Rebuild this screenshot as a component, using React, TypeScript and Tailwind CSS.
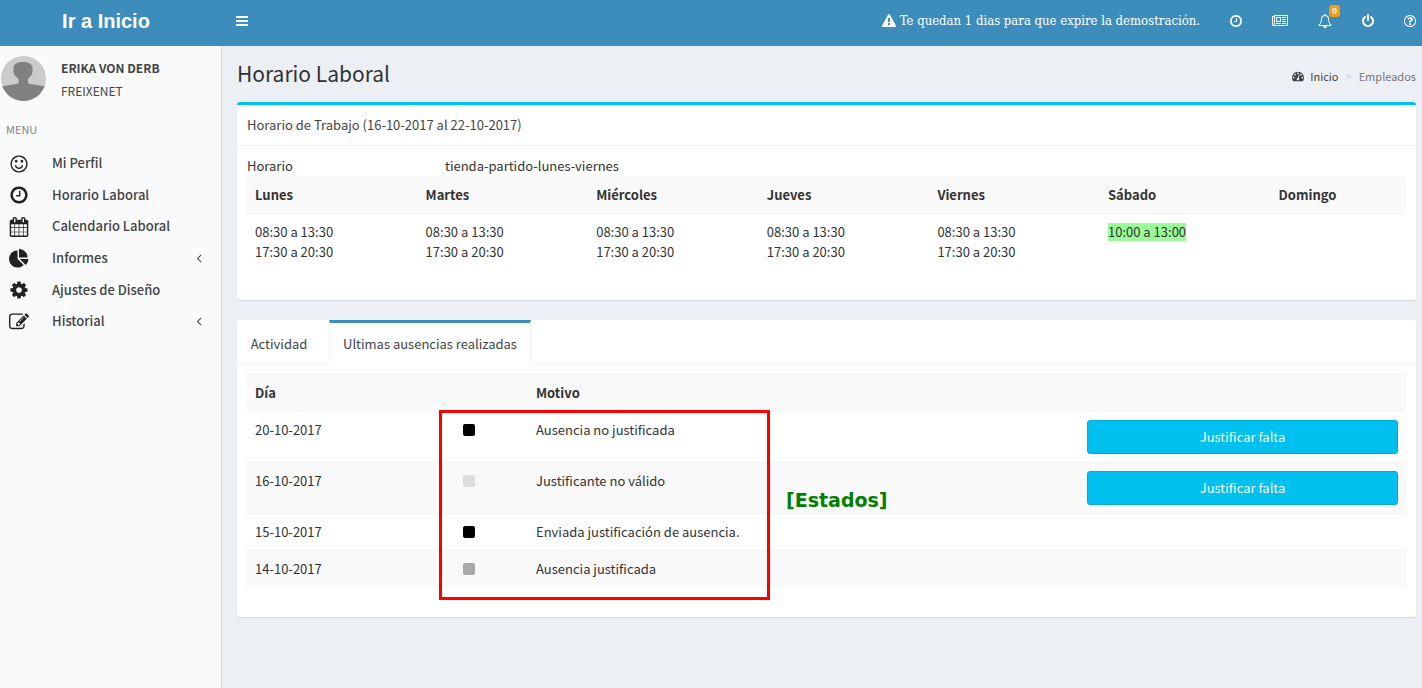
import React from 'react';

const ICONS = {
  bars: 'M1664 1344v128q0 26-19 45t-45 19h-1408q-26 0-45-19t-19-45v-128q0-26 19-45t45-19h1408q26 0 45 19t19 45zm0-512v128q0 26-19 45t-45 19h-1408q-26 0-45-19t-19-45v-128q0-26 19-45t45-19h1408q26 0 45 19t19 45zm0-512v128q0 26-19 45t-45 19h-1408q-26 0-45-19t-19-45v-128q0-26 19-45t45-19h1408q26 0 45 19t19 45z',
  clock: 'M1024 544v448q0 14-9 23t-23 9h-320q-14 0-23-9t-9-23v-64q0-14 9-23t23-9h224v-352q0-14 9-23t23-9h64q14 0 23 9t9 23zm416 352q0-148-73-273t-198-198-273-73-273 73-198 198-73 273 73 273 198 198 273 73 273-73 198-198 73-273zm224 0q0 209-103 385.5t-279.5 279.5-385.5 103-385.5-103-279.5-279.5-103-385.5 103-385.5 279.5-279.5 385.5-103 385.5 103 279.5 279.5 103 385.5z',
  warning: 'M1024 1375v-190q0-14-9.5-23.5t-22.5-9.5h-192q-13 0-22.5 9.5t-9.5 23.5v190q0 14 9.5 23.5t22.5 9.5h192q13 0 22.5-9.5t9.5-23.5zm-2-374l18-459q0-12-10-19-13-11-24-11h-220q-11 0-24 11-10 7-10 21l17 457q0 10 10 16.5t24 6.5h185q14 0 23.5-6.5t10.5-16.5zm-14-934l768 1408q35 63-2 126-17 29-46.5 46t-63.5 17h-1536q-34 0-63.5-17t-46.5-46q-37-63-2-126l768-1408q17-31 47-49t65-18 65 18 47 49z',
  power: 'M1664 896q0 156-61 298t-164 245-245 164-298 61-298-61-245-164-164-245-61-298q0-182 80.5-343t226.5-270q43-32 95.5-25t83.5 50q32 42 24.5 94.5t-49.5 84.5q-98 74-151.5 181t-53.5 228q0 104 40.5 198.5t109.5 163.5 163.5 109.5 198.5 40.5 198.5-40.5 163.5-109.5 109.5-163.5 40.5-198.5q0-121-53.5-228t-151.5-181q-42-32-49.5-84.5t24.5-94.5q31-43 84-50t95 25q146 109 226.5 270t80.5 343zm-640-768v640q0 52-38 90t-90 38-90-38-38-90v-640q0-52 38-90t90-38 90 38 38 90z',
  question: 'M1008 1200v160q0 14-9 23t-23 9h-160q-14 0-23-9t-9-23v-160q0-14 9-23t23-9h160q14 0 23 9t9 23zm256-496q0 50-15 90t-45.5 69-52 44-59.5 36q-32 18-46.5 28t-26 24-11.5 29v32q0 14-9 23t-23 9h-160q-14 0-23-9t-9-23v-68q0-35 10.5-64.5t24-47.5 39-35.5 41-25.5 44.5-21q53-25 75-43t22-49q0-42-43.5-71.5t-95.5-29.5q-56 0-95 27-29 20-80 83-9 12-25 12-11 0-19-6l-108-82q-10-7-12-20t5-23q122-192 349-192 129 0 238.5 89.5t109.5 214.5zm-368-448q-130 0-248.5 51t-204 136.5-136.5 204-51 248.5 51 248.5 136.5 204 204 136.5 248.5 51 248.5-51 204-136.5 136.5-204 51-248.5-51-248.5-136.5-204-204-136.5-248.5-51zm768 640q0 209-103 385.5t-279.5 279.5-385.5 103-385.5-103-279.5-279.5-103-385.5 103-385.5 279.5-279.5 385.5-103 385.5 103 279.5 279.5 103 385.5z',
  bell: 'M912 1696q0-16-16-16-59 0-101.5-42.5t-42.5-101.5q0-16-16-16t-16 16q0 73 51.5 124.5t124.5 51.5q16 0 16-16zm-666-288h1300q-266-300-266-832 0-51-24-105t-69-103-121.5-80.5-169.5-31.5-169.5 31.5-121.5 80.5-69 103-24 105q0 532-266 832zm1482 0q0 52-38 90t-90 38h-448q0 106-75 181t-181 75-181-75-75-181h-448q-52 0-90-38t-38-90q50-42 91-88t85-119.5 74.5-158.5 50-206 19.5-260q0-152 117-282.5t307-158.5q-8-19-8-39 0-40 28-68t68-28 68 28 28 68q0 20-8 39 190 28 307 158.5t117 282.5q0 139 19.5 260t50 206 74.5 158.5 85 119.5 91 88z',
  newspaper: 'M1024 512h-384v384h384v-384zm128 640v128h-640v-128h640zm0-768v640h-640v-640h640zm640 768v128h-512v-128h512zm0-256v128h-512v-128h512zm0-256v128h-512v-128h512zm0-256v128h-512v-128h512zm-1536 960v-960h-128v960q0 26 19 45t45 19 45-19 19-45zm1664 0v-1088h-1536v1088q0 33-11 64h1483q26 0 45-19t19-45zm128-1216v1216q0 80-56 136t-136 56h-1664q-80 0-136-56t-56-136v-1088h256v-128h1792z',
  dashboard: 'M384 1152q0-53-37.5-90.5t-90.5-37.5-90.5 37.5-37.5 90.5 37.5 90.5 90.5 37.5 90.5-37.5 37.5-90.5zm192-448q0-53-37.5-90.5t-90.5-37.5-90.5 37.5-37.5 90.5 37.5 90.5 90.5 37.5 90.5-37.5 37.5-90.5zm428 481l101-382q6-26-7.5-48.5t-38.5-29.5-48 6.5-30 39.5l-101 382q-60 5-107 43.5t-63 98.5q-20 77 20 146t117 89 146-20 89-117q16-60-6-117t-72-91zm660-33q0-53-37.5-90.5t-90.5-37.5-90.5 37.5-37.5 90.5 37.5 90.5 90.5 37.5 90.5-37.5 37.5-90.5zm-640-640q0-53-37.5-90.5t-90.5-37.5-90.5 37.5-37.5 90.5 37.5 90.5 90.5 37.5 90.5-37.5 37.5-90.5zm448 192q0-53-37.5-90.5t-90.5-37.5-90.5 37.5-37.5 90.5 37.5 90.5 90.5 37.5 90.5-37.5 37.5-90.5zm320 448q0 261-141 483-19 29-54 29h-1402q-35 0-54-29-141-221-141-483 0-182 71-348t191-286 286-191 348-71 348 71 286 191 191 286 71 348z',
  smile: 'M1262 1075q-37 121-138 195t-228 74-228-74-138-195q-8-25 4-48.5t38-31.5q25-8 48.5 4t31.5 38q25 80 92.5 129.5t151.5 49.5 151.5-49.5 92.5-129.5q8-26 32-38t49-4 37 31.5 4 48.5zm-494-435q0 53-37.5 90.5t-90.5 37.5-90.5-37.5-37.5-90.5 37.5-90.5 90.5-37.5 90.5 37.5 37.5 90.5zm512 0q0 53-37.5 90.5t-90.5 37.5-90.5-37.5-37.5-90.5 37.5-90.5 90.5-37.5 90.5 37.5 37.5 90.5zm256 256q0-130-51-248.5t-136.5-204-204-136.5-248.5-51-248.5 51-204 136.5-136.5 204-51 248.5 51 248.5 136.5 204 204 136.5 248.5 51 248.5-51 204-136.5 136.5-204 51-248.5zm128 0q0 209-103 385.5t-279.5 279.5-385.5 103-385.5-103-279.5-279.5-103-385.5 103-385.5 279.5-279.5 385.5-103 385.5 103 279.5 279.5 103 385.5z',
  calendar: 'M192 1664h288v-288h-288v288zm352 0h320v-288h-320v288zm-352-352h288v-320h-288v320zm352 0h320v-320h-320v320zm-352-384h288v-288h-288v288zm736 736h320v-288h-320v288zm-384-736h320v-288h-320v288zm768 736h288v-288h-288v288zm-384-352h320v-320h-320v320zm-352-864v-288q0-13-9.5-22.5t-22.5-9.5h-64q-13 0-22.5 9.5t-9.5 22.5v288q0 13 9.5 22.5t22.5 9.5h64q13 0 22.5-9.5t9.5-22.5zm736 864h288v-320h-288v320zm-384-384h320v-288h-320v288zm384 0h288v-288h-288v288zm32-480v-288q0-13-9.5-22.5t-22.5-9.5h-64q-13 0-22.5 9.5t-9.5 22.5v288q0 13 9.5 22.5t22.5 9.5h64q13 0 22.5-9.5t9.5-22.5zm384-64v1280q0 52-38 90t-90 38h-1408q-52 0-90-38t-38-90v-1280q0-52 38-90t90-38h128v-96q0-66 47-113t113-47h64q66 0 113 47t47 113v96h384v-96q0-66 47-113t113-47h64q66 0 113 47t47 113v96h128q52 0 90 38t38 90z',
  pie: 'M768 890l546 546q-106 108-247.5 168t-298.5 60q-209 0-385.5-103t-279.5-279.5-103-385.5 103-385.5 279.5-279.5 385.5-103v762zm187 6h773q0 157-60 298.5t-168 247.5zm709-128h-768v-768q209 0 385.5 103t279.5 279.5 103 385.5z',
  cog: 'M1152 896q0-106-75-181t-181-75-181 75-75 181 75 181 181 75 181-75 75-181zm512-109v222q0 12-8 23t-20 13l-185 28q-19 54-39 91 35 50 107 138 10 12 10 25t-9 23q-27 37-99 108t-94 71q-12 0-26-9l-138-108q-44 23-91 38-16 136-29 186-7 28-36 28h-222q-14 0-24.5-8.5t-11.5-21.5l-28-184q-49-16-90-37l-141 107q-10 9-25 9-14 0-25-11-126-114-165-168-7-10-7-23 0-12 8-23 15-21 51-66.5t54-70.5q-27-50-41-99l-183-27q-13-2-21-12.5t-8-23.5v-222q0-12 8-23t19-13l186-28q14-46 39-92-40-57-107-138-10-12-10-24 0-10 9-23 26-36 98.5-107.5t94.5-71.5q13 0 26 10l138 107q44-23 91-38 16-136 29-186 7-28 36-28h222q14 0 24.5 8.5t11.5 21.5l28 184q49 16 90 37l142-107q9-9 24-9 13 0 25 10 129 119 165 170 7 8 7 22 0 12-8 23-15 21-51 66.5t-54 70.5q26 50 41 98l183 28q13 2 21 12.5t8 23.5z',
  edit: 'M888 1184l116-116-152-152-116 116v56h96v96h56zm440-720q-16-16-33 1l-350 350q-17 17-1 33t33-1l350-350q17-17 1-33zm80 594v190q0 119-84.5 203.5t-203.5 84.5h-832q-119 0-203.5-84.5t-84.5-203.5v-832q0-119 84.5-203.5t203.5-84.5h832q63 0 117 25 15 7 18 23 3 17-9 29l-49 49q-14 14-32 8-23-6-45-6h-832q-66 0-113 47t-47 113v832q0 66 47 113t113 47h832q66 0 113-47t47-113v-126q0-13 9-22l64-64q15-15 35-7t20 29zm-96-738l288 288-672 672h-288v-288zm444 132l-92 92-288-288 92-92q28-28 68-28t68 28l152 152q28 28 28 68t-28 68z',
  angleLeft: 'M1203 544q0 13-10 23l-393 393 393 393q10 10 10 23t-10 23l-50 50q-10 10-23 10t-23-10l-466-466q-10-10-10-23t10-23l466-466q10-10 23-10t23 10l50 50q10 10 10 23z',
};

type IconName = keyof typeof ICONS;

const Icon: React.FC<{ name: IconName; className?: string }> = ({ name, className = 'w-3.5 h-3.5' }) => (
  <svg viewBox={name === 'newspaper' ? '0 0 2048 1792' : '0 0 1792 1792'} className={`shrink-0 ${className}`} fill="currentColor" aria-hidden="true">
    <path d={ICONS[name]} />
  </svg>
);

const menu: { label: string; icon: IconName; children?: boolean }[] = [
  { label: 'Mi Perfil', icon: 'smile' },
  { label: 'Horario Laboral', icon: 'clock' },
  { label: 'Calendario Laboral', icon: 'calendar' },
  { label: 'Informes', icon: 'pie', children: true },
  { label: 'Ajustes de Diseño', icon: 'cog' },
  { label: 'Historial', icon: 'edit', children: true },
];

const split = ['08:30 a 13:30', '17:30 a 20:30'];

const week: { day: string; hours: string[]; highlight?: boolean }[] = [
  { day: 'Lunes', hours: split },
  { day: 'Martes', hours: split },
  { day: 'Miércoles', hours: split },
  { day: 'Jueves', hours: split },
  { day: 'Viernes', hours: split },
  { day: 'Sábado', hours: ['10:00 a 13:00'], highlight: true },
  { day: 'Domingo', hours: [] },
];

const absences = [
  { date: '20-10-2017', color: 'bg-black', reason: 'Ausencia no justificada', action: true },
  { date: '16-10-2017', color: 'bg-[#dddddd]', reason: 'Justificante no válido', action: true },
  { date: '15-10-2017', color: 'bg-black', reason: 'Enviada justificación de ausencia.', action: false },
  { date: '14-10-2017', color: 'bg-[#a9a9a9]', reason: 'Ausencia justificada', action: false },
];

const Header: React.FC = () => (
  <header className="flex h-[46px] bg-[#3c8dbc] text-white">
    <a href="#" className="flex w-[212px] shrink-0 items-center justify-center pb-1 font-['Liberation_Sans',sans-serif] text-xl font-bold">
      Ir a Inicio
    </a>
    <button type="button" aria-label="Menú" className="ml-2 flex items-center px-[15px] pb-1">
      <Icon name="bars" />
    </button>
    <div className="ml-auto flex items-center pb-1">
      <p className="flex items-center gap-1 pr-[15px] font-['DejaVu_Serif_Condensed','DejaVu_Serif',serif] text-[13px] whitespace-nowrap">
        <Icon name="warning" />
        Te quedan 1 dias para que expire la demostración.
      </p>
      <button type="button" aria-label="Reloj" className="px-3.5"><Icon name="clock" /></button>
      <button type="button" aria-label="Noticias" className="px-[15px]"><Icon name="newspaper" className="w-4 h-3.5" /></button>
      <button type="button" aria-label="Avisos" className="relative px-[15px]">
        <Icon name="bell" />
        <span className="absolute -top-[9px] right-[7px] rounded-[3px] bg-[#f39c12] px-[3px] py-0.5 font-['Liberation_Sans',sans-serif] text-[9px] leading-2 font-bold">0</span>
      </button>
      <button type="button" aria-label="Salir" className="px-3.5"><Icon name="power" /></button>
      <button type="button" aria-label="Ayuda" className="pr-[5px] pl-3.5"><Icon name="question" /></button>
    </div>
  </header>
);

const Sidebar: React.FC = () => (
  <aside className="w-[222px] shrink-0 border-r border-[#d2d6de] bg-[#f9fafc] text-[#444]">
    {/* User panel */}
    <div className="flex gap-[15px] pt-2.5 pl-px">
      <svg viewBox="0 0 45 45" className="h-[45px] w-[45px] rounded-full" aria-hidden="true">
        <rect width="45" height="45" fill="#cbcbcb" />
        <path d="M12.500 11.500C13 7.500 17 6 22 6s9 1.500 9.500 5.500c.3 2.800 0 5-.8 7-.9 2.400-3.500 3-3.800 5-.3 2.600-.2 4.100 2.500 4.600L45 30.500V45H0V30.500l15.500-2.400c2.700-.6 2.500-2.100 2.100-4.600-.3-2-3.400-2.600-4.300-5-.8-2-1.100-4.200-.8-7z" fill="#808080" />
      </svg>
      <div className="leading-[23px]">
        <p className="text-[12px] font-bold">ERIKA VON DERB</p>
        <p className="text-[12px]">FREIXENET</p>
      </div>
    </div>

    <p className="mt-[19px] pl-1.5 text-[11px] leading-4 text-[#848484]">MENU</p>
    <nav className="mt-2.5 grid h-[190px] grid-rows-6">
      {menu.map((item) => (
        <a key={item.label} href="#" className="flex items-center pr-[15px] pl-[9px] text-[13px] font-medium">
          <Icon name={item.icon} className="mt-0.5 h-5 w-5 text-[#222]" />
          <span className="ml-[23px] flex-1">{item.label}</span>
          {item.children && <Icon name="angleLeft" />}
        </a>
      ))}
    </nav>
  </aside>
);

const Schedule: React.FC = () => (
  <section className="rounded-[3px] border-t-[3px] border-[#00c0ef] bg-white shadow-[0_1px_1px_rgba(0,0,0,0.1)]">
    <h2 className="border-b border-[#f4f4f4] px-2.5 py-2.5 leading-5 text-[#444]">Horario de Trabajo (16-10-2017 al 22-10-2017)</h2>
    <div className="px-2.5 pt-2.5 pb-[30px]">
      <div className="flex leading-5">
        <span className="w-[198px]">Horario</span>
        <span>tienda-partido-lunes-viernes</span>
      </div>
      <table className="w-full table-fixed text-left leading-5">
        <thead>
          <tr className="border-y border-[#f4f4f4] bg-[#f9f9f9]">
            {week.map((d) => (
              <th key={d.day} className="p-2 font-bold not-last:w-[14.72%]">{d.day}</th>
            ))}
          </tr>
        </thead>
        <tbody>
          <tr className="align-top">
            {week.map((d) => (
              <td key={d.day} className="p-2">
                {d.hours.map((h) => (
                  <div key={h}>
                    <span className={d.highlight ? 'inline-block bg-[#98fb98] leading-[18px]' : ''}>{h}</span>
                  </div>
                ))}
              </td>
            ))}
          </tr>
        </tbody>
      </table>
    </div>
  </section>
);

const Absences: React.FC = () => (
  <section className="relative mt-5 rounded-[3px] bg-white shadow-[0_1px_1px_rgba(0,0,0,0.1)]">
    <div role="tablist" className="flex h-11 border-b border-[#f4f4f4] text-[#444]">
      <button type="button" role="tab" aria-selected={false} className="w-[92px] border-t-[3px] border-transparent pr-2 pt-px">
        Actividad
      </button>
      <button type="button" role="tab" aria-selected={true} className="-mb-px w-[202px] border-x border-t-[3px] border-x-[#f4f4f4] border-t-[#3c8dbc] bg-white">
        Ultimas ausencias realizadas
      </button>
    </div>
    <div className="px-2.5 pt-2.5 pb-[30px]">
      <table className="w-full table-fixed text-left leading-5">
        <thead>
          <tr className="border-t border-[#f4f4f4] bg-[#f9f9f9]">
            <th className="w-[208px] p-2 font-bold">Día</th>
            <th className="w-[73px] p-2"></th>
            <th className="p-2 font-bold">Motivo</th>
            <th className="w-[327px] p-2"></th>
          </tr>
        </thead>
        <tbody>
          {absences.map((row) => (
            <tr key={row.date} className="border-t border-[#f4f4f4] align-top even:bg-[#f9f9f9]">
              <td className="p-2">{row.date}</td>
              <td className="p-2">
                <span className={`mt-1 block h-3 w-3 rounded-[2px] ${row.color}`} />
              </td>
              <td className="p-2">{row.reason}</td>
              <td className="p-2">
                {row.action && (
                  <button type="button" className="h-[34px] w-full rounded-[3px] border border-[#00acd6] bg-[#00c0ef] text-white">
                    Justificar falta
                  </button>
                )}
              </td>
            </tr>
          ))}
        </tbody>
      </table>
    </div>

    {/* States callout */}
    <div className="pointer-events-none absolute top-[90px] left-[202px] h-[190px] w-[331px] border-[3px] border-[#ff0000]" />
    <p className="absolute top-[166px] left-[549px] font-['DejaVu_Sans',sans-serif] text-[19px] leading-7 font-bold text-[#008000]">[Estados]</p>
  </section>
);

const App: React.FC = () => {
  return (
    <div className="flex min-h-screen flex-col bg-[#ecf0f5] font-['Noto_Sans_CJK_SC',sans-serif] text-[13px] text-[#333]">
      <Header />
      <div className="flex flex-1">
        <Sidebar />
        <main className="min-w-0 flex-1 pr-1.5 pl-[15px]">
          <div className="flex h-14 items-center justify-between">
            <h1 className="text-[21px]">Horario Laboral</h1>
            <nav aria-label="breadcrumb" className="flex items-center pt-1 text-[11px] text-[#444]">
              <a href="#" className="flex items-center gap-1.5"><Icon name="dashboard" className="h-3 w-3" />Inicio</a>
              <span className="px-[7px] text-[#ccc]">&gt;</span>
              <span className="text-[#777]">Empleados</span>
            </nav>
          </div>
          <Schedule />
          <Absences />
        </main>
      </div>
    </div>
  );
};

export default App;
